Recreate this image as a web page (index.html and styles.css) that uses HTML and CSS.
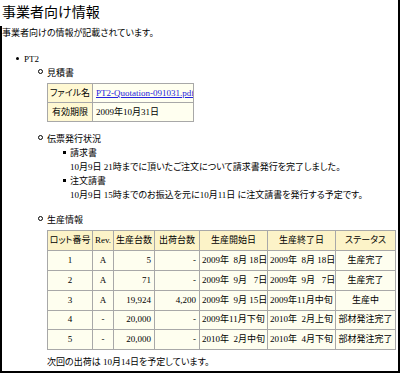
FILE: index.html
```html
<!DOCTYPE html>
<html>
<head>
    <meta charset="utf-8">
    <title>事業者向け情報</title>
    <link rel="stylesheet" href="styles.css">
</head>
<body>
<div class="page">
    <h1 class="title">事業者向け情報</h1>
    <div class="content">
        <p class="intro">事業者向けの情報が記載されています。</p>

        <ul class="products">
            <li class="product">PT2
                <ul class="sections">
                    <li class="section quote-sec">見積書
                        <table class="quote">
                            <col class="c-label"><col class="c-value">
                            <tr><th>ファイル名</th><td><a href="#">PT2-Quotation-091031.pdf</a></td></tr>
                            <tr><th>有効期限</th><td>2009年10月31日</td></tr>
                        </table>
                    </li>

                    <li class="section slip-sec">伝票発行状況
                        <ul class="slips">
                            <li>請求書<br>10月9日 21時までに頂いたご注文について請求書発行を完了しました。</li>
                            <li>注文請書<br>10月9日 15時までのお振込を元に10月11日 に注文請書を発行する予定です。</li>
                        </ul>
                    </li>

                    <li class="section">生産情報
                        <table class="prod">
                            <col class="c-lot"><col class="c-rev"><col class="c-made"><col class="c-ship">
                            <col class="c-start"><col class="c-end"><col class="c-status">
                            <thead>
                            <tr><th>ロット番号</th><th>Rev.</th><th>生産台数</th><th>出荷台数</th><th>生産開始日</th><th>生産終了日</th><th>ステータス</th></tr>
                            </thead>
                            <tbody>
                            <tr><td class="mid">1</td><td class="mid">A</td><td class="num">5</td><td class="num">-</td><td>2009年&nbsp;&nbsp;8月 18日</td><td>2009年&nbsp;&nbsp;8月 18日</td><td class="mid">生産完了</td></tr>
                            <tr><td class="mid">2</td><td class="mid">A</td><td class="num">71</td><td class="num">-</td><td>2009年&nbsp;&nbsp;9月&nbsp;&nbsp;&nbsp;7日</td><td>2009年&nbsp;&nbsp;9月&nbsp;&nbsp;&nbsp;7日</td><td class="mid">生産完了</td></tr>
                            <tr><td class="mid">3</td><td class="mid">A</td><td class="num">19,924</td><td class="num">4,200</td><td>2009年&nbsp;&nbsp;9月 15日</td><td>2009年11月中旬</td><td class="mid">生産中</td></tr>
                            <tr><td class="mid">4</td><td class="mid">-</td><td class="num">20,000</td><td class="num">-</td><td>2009年11月下旬</td><td>2010年&nbsp;&nbsp;2月上旬</td><td class="mid">部材発注完了</td></tr>
                            <tr><td class="mid">5</td><td class="mid">-</td><td class="num">20,000</td><td class="num">-</td><td>2010年&nbsp;&nbsp;2月中旬</td><td>2010年&nbsp;&nbsp;4月下旬</td><td class="mid">部材発注完了</td></tr>
                            </tbody>
                        </table>
                        <p class="next">次回の出荷は 10月14日を予定しています。</p>
                    </li>
                </ul>
            </li>
        </ul>
    </div>
</div>
</body>
</html>
```

FILE: styles.css
```css
        html, body {
            margin: 0;
            padding: 0;
            background: #fff;
        }

        body {
            font-family: "Liberation Serif", "Noto Sans CJK JP", serif;
            font-size: 9px;
            line-height: 14px;
            color: #000;
            font-feature-settings: "palt";
        }

        .page {
            width: 398px;
            height: 371px;
            border-right: 2px solid #000;
            border-bottom: 2px solid #000;
            overflow: hidden;
        }

        .title {
            margin: 0;
            padding: 1px 0 0 2px;
            font-family: "Noto Sans CJK JP", sans-serif;
            font-size: 14px;
            line-height: 20px;
            font-weight: normal;
        }

        .content {
            border-left: 2px solid #000;
            height: 350px;
        }

        .intro {
            margin: 5px 0 0 0;
        }

        ul {
            list-style: none;
            margin: 0;
            padding: 0 0 0 23px;
        }

        .products {
            margin-top: 12px;
            padding-left: 22px;
        }

        li::before {
            content: "";
            display: inline-block;
            vertical-align: 2px;
        }

        .product::before {
            width: 3px;
            height: 3px;
            border-radius: 50%;
            background: #000;
            margin: 0 5px 0 -8px;
        }

        .section::before {
            width: 3px;
            height: 3px;
            border: 1px solid #000;
            border-radius: 50%;
            margin: 0 4px 0 -9px;
            background: #fff;
        }

        .quote-sec {
            margin-bottom: 10px;
        }

        .slip-sec {
            margin-bottom: 11px;
        }

        .slips li::before {
            width: 3px;
            height: 3px;
            background: #000;
            margin: 0 4px 0 -7px;
        }

        table {
            border-collapse: collapse;
            table-layout: fixed;
            margin-top: 3px;
            border: 1px solid #888;
        }

        th, td {
            border: 1px solid #a8a8a8;
            padding: 3.6px 2px;
            line-height: 11px;
            font-weight: normal;
            white-space: nowrap;
            overflow: hidden;
        }

        .quote {
            width: 146px;
        }

        .quote .c-label { width: 45px; }
        .quote .c-value { width: 101px; }

        .quote th {
            background: #fff8d2;
            text-align: center;
            padding-left: 1px;
            padding-right: 1px;
        }

        .quote td {
            background: #fffff0;
            text-align: left;
            padding-left: 3px;
        }

        .quote a {
            color: #2222dd;
        }

        .prod {
            width: 348px;
        }

        .prod th, .prod td {
            padding-top: 3.9px;
            padding-bottom: 3.9px;
        }

        .prod .c-lot { width: 45px; }
        .prod .c-rev { width: 21px; }
        .prod .c-made { width: 41px; }
        .prod .c-ship { width: 45px; }
        .prod .c-start { width: 68px; }
        .prod .c-end { width: 68px; }
        .prod .c-status { width: 60px; }

        .prod th {
            background: #fcf3c8;
            text-align: center;
            padding-left: 1px;
            padding-right: 1px;
        }

        .prod td {
            background: #fefeef;
            text-align: left;
        }

        .prod td.mid {
            text-align: center;
        }

        .prod td.num {
            text-align: right;
            padding-right: 3px;
        }

        .next {
            margin: 5px 0 0 0;
        }
```
